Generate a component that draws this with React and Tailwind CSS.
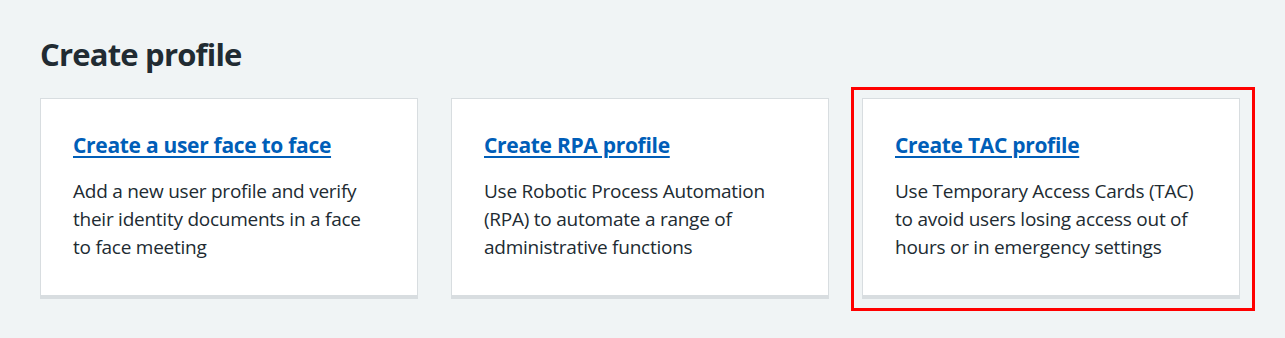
const cards = [
  {
    title: "Create a user face to face",
    text: "Add a new user profile and verify their identity documents in a face to face meeting",
  },
  {
    title: "Create RPA profile",
    text: "Use Robotic Process Automation (RPA) to automate a range of administrative functions",
  },
  {
    title: "Create TAC profile",
    text: "Use Temporary Access Cards (TAC) to avoid users losing access out of hours or in emergency settings",
    highlight: true,
  },
];

function Card({ title, text, highlight }) {
  return (
    <div className="relative">
      {highlight && (
        <div className="absolute -left-[11px] -top-[11px] -right-[15px] -bottom-[12px] border-[3px] border-[#ff0000] pointer-events-none" />
      )}
      <div className="bg-white border border-[#d8dde0] border-b-4 pt-8 pb-[34px] px-8">
        <a
          href="#"
          className="block text-[21px] leading-[28px] font-bold tracking-[-0.3px] text-[#005eb8] underline decoration-[2px] underline-offset-[3px] mb-[18px]"
        >
          {title}
        </a>
        <p className="max-w-[305px] text-[19px] leading-[28px] tracking-[-0.25px] text-[#212b32]">{text}</p>
      </div>
    </div>
  );
}

export default function App() {
  return (
    <div
      className="min-h-[338px] bg-[#f0f4f5] pt-[34px] px-10"
      style={{ fontFamily: '"Open Sans", "Noto Sans", sans-serif' }}
    >
      <h2 className="text-[31px] leading-[40px] font-bold tracking-[-0.8px] text-[#212b32] mb-6">
        Create profile
      </h2>
      <div className="grid grid-cols-3 gap-[33px] w-[1200px]">
        {cards.map((c) => (
          <Card key={c.title} {...c} />
        ))}
      </div>
    </div>
  );
}
